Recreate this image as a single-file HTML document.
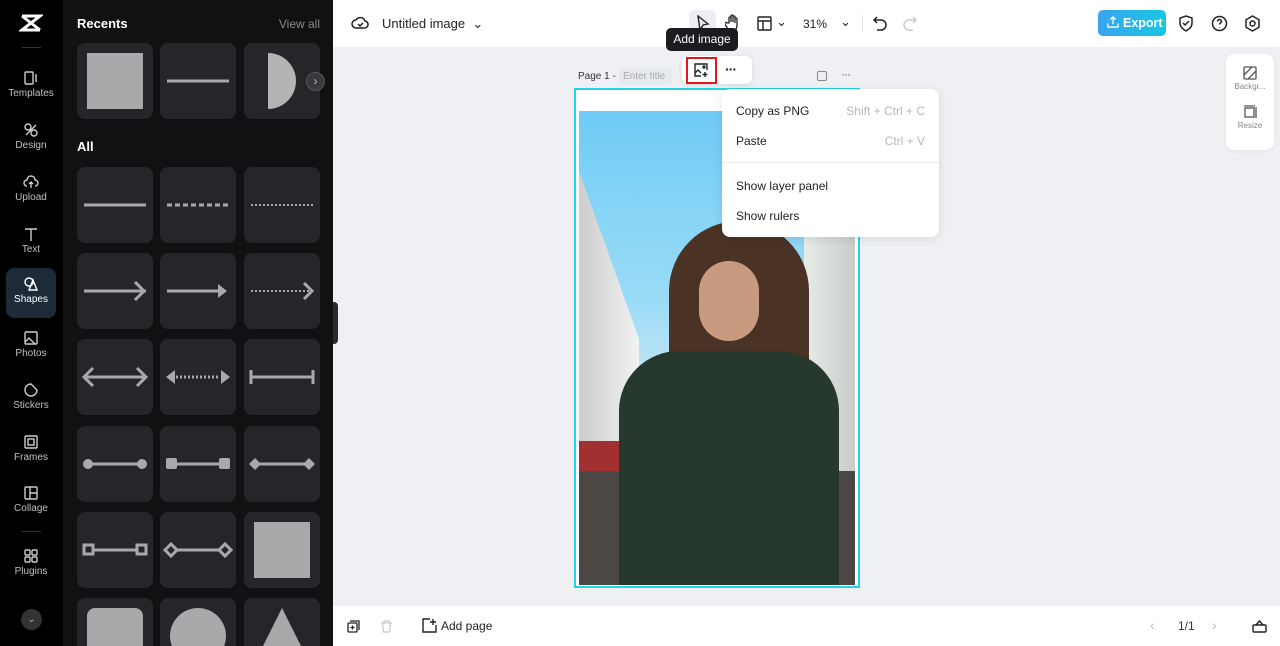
<!DOCTYPE html>
<html><head><meta charset="utf-8"><style>
*{box-sizing:border-box;margin:0;padding:0}
html{width:1280px;height:646px;overflow:hidden}
body{width:1280px;height:646px;overflow:hidden;font-family:"Liberation Sans",sans-serif;background:#eef0f4;position:relative}
.nav{position:absolute;left:0;top:0;width:63px;height:646px;background:#000}
.nav .it{position:absolute;left:6px;width:50px;height:50px;color:#bfc0c4;font-size:10px;text-align:center}
.nav .it svg{display:block;margin:8px auto 2px}
.panel{position:absolute;left:63px;top:0;width:270px;height:646px;background:#111114;overflow:hidden}
.card{position:absolute;width:76px;height:76px;background:#252629;border-radius:8px}
.card svg{position:absolute;left:0;top:0}
.top{position:absolute;left:333px;top:0;width:947px;height:47px;background:#fff}
.bot{position:absolute;left:333px;top:606px;width:947px;height:40px;background:#fff}
.menu{position:absolute;left:722px;top:89px;width:217px;height:148px;background:#fff;border-radius:8px;box-shadow:0 2px 10px rgba(0,0,0,.1);font-size:12px;color:#222}
.menu div{position:absolute;left:14px}
.menu span{position:absolute;right:14px;color:#b5b8bf}
</style></head><body>
<div class="nav">
 <svg style="position:absolute;left:19px;top:13px" width="24" height="20" viewBox="0 0 24 20"><path d="M3 3h18L3 17h18M3 3l18 14" stroke="#fff" stroke-width="3" fill="none"/></svg>
 <div style="position:absolute;left:22px;top:47px;width:19px;height:1px;background:#333"></div>
 <div class="it" style="top:62px"><svg width="16" height="16" viewBox="0 0 16 16" fill="none" stroke="#ccc" stroke-width="1.4"><rect x="2" y="2" width="8" height="12" rx="1"/><path d="M13 4v8"/></svg>Templates</div>
 <div class="it" style="top:114px"><svg width="16" height="16" viewBox="0 0 16 16" fill="none" stroke="#ccc" stroke-width="1.4"><circle cx="5" cy="5" r="3"/><circle cx="11" cy="11" r="3"/><path d="M3 13l10-10"/></svg>Design</div>
 <div class="it" style="top:166px"><svg width="16" height="16" viewBox="0 0 16 16" fill="none" stroke="#ccc" stroke-width="1.4"><path d="M4 12a3 3 0 010-6 4 4 0 018 0 3 3 0 010 6M8 8v6M6 10l2-2 2 2"/></svg>Upload</div>
 <div class="it" style="top:218px"><svg width="16" height="16" viewBox="0 0 16 16" fill="none" stroke="#ccc" stroke-width="1.4"><path d="M2 3h12M8 3v12"/></svg>Text</div>
 <div class="it" style="top:268px;height:50px;background:#1d2a38;border-radius:8px;color:#fff"><svg width="16" height="16" viewBox="0 0 16 16" fill="none" stroke="#fff" stroke-width="1.4"><circle cx="6" cy="6" r="4"/><path d="M10 4l4 10H6z"/></svg>Shapes</div>
 <div class="it" style="top:322px"><svg width="16" height="16" viewBox="0 0 16 16" fill="none" stroke="#ccc" stroke-width="1.4"><rect x="2" y="2" width="12" height="12" rx="1"/><path d="M2 12l4-4 6 6"/></svg>Photos</div>
 <div class="it" style="top:374px"><svg width="16" height="16" viewBox="0 0 16 16" fill="none" stroke="#ccc" stroke-width="1.4"><path d="M14 8a6 6 0 11-6-6l6 6z"/></svg>Stickers</div>
 <div class="it" style="top:426px"><svg width="16" height="16" viewBox="0 0 16 16" fill="none" stroke="#ccc" stroke-width="1.4"><rect x="2" y="2" width="12" height="12" rx="1"/><rect x="5" y="5" width="6" height="6"/></svg>Frames</div>
 <div class="it" style="top:477px"><svg width="16" height="16" viewBox="0 0 16 16" fill="none" stroke="#ccc" stroke-width="1.4"><rect x="2" y="2" width="12" height="12" rx="1"/><path d="M7 2v12M7 8h7"/></svg>Collage</div>
 <div style="position:absolute;left:22px;top:531px;width:19px;height:1px;background:#333"></div>
 <div class="it" style="top:540px"><svg width="16" height="16" viewBox="0 0 16 16" fill="none" stroke="#ccc" stroke-width="1.4"><rect x="2" y="2" width="5" height="5" rx="1"/><rect x="9" y="2" width="5" height="5" rx="1"/><rect x="2" y="9" width="5" height="5" rx="1"/><rect x="9" y="9" width="5" height="5" rx="1"/></svg>Plugins</div>
 <div style="position:absolute;left:21px;top:609px;width:21px;height:21px;border-radius:50%;background:#333;color:#aaa;font-size:10px;text-align:center;line-height:21px">⌄</div>
</div>
<div class="panel">
 <div style="position:absolute;left:14px;top:16px;color:#fff;font-weight:bold;font-size:13px">Recents</div>
 <div style="position:absolute;right:13px;top:17px;color:#888;font-size:12px">View all</div>
 <div style="position:absolute;left:14px;top:139px;color:#fff;font-weight:bold;font-size:13px">All</div>
 <div id="cards" style="position:absolute;left:-63px;top:0;width:333px;height:646px"></div>
 <div style="position:absolute;left:243px;top:72px;width:19px;height:19px;border-radius:50%;background:#38393d;border:1px solid #555;color:#bbb;font-size:12px;text-align:center;line-height:16px">›</div>
</div>
<div style="position:absolute;left:333px;top:302px;width:5px;height:42px;background:#2a2a2d;border-radius:0 4px 4px 0"></div>

<div class="top">
 <svg style="position:absolute;left:18px;top:15px" width="18" height="16" viewBox="0 0 18 16" fill="none" stroke="#222" stroke-width="1.5"><path d="M5 13a4 4 0 010-8 5 5 0 019 1 3.5 3.5 0 01-1 7z"/><path d="M7 9l2 2 3-3"/></svg>
 <div style="position:absolute;left:49px;top:16px;font-size:13px;color:#222">Untitled image &nbsp;⌄</div>
 <div style="position:absolute;left:356px;top:10px;width:27px;height:27px;background:#eceef1;border-radius:6px"></div>
 <svg style="position:absolute;left:363px;top:15px" width="14" height="16" viewBox="0 0 14 16" fill="none" stroke="#222" stroke-width="1.4"><path d="M2 1l10 8-5 1-3 5z"/></svg>
 <svg style="position:absolute;left:392px;top:14px" width="16" height="18" viewBox="0 0 16 18" fill="none" stroke="#222" stroke-width="1.3"><path d="M4 9V4a1 1 0 012 0v4V2a1 1 0 012 0v6V3a1 1 0 012 0v6V5a1 1 0 012 0v6c0 4-2 6-5 6s-4-2-6-5l-1-2a1 1 0 012-1z"/></svg>
 <svg style="position:absolute;left:424px;top:16px" width="15" height="15" viewBox="0 0 15 15" fill="none" stroke="#222" stroke-width="1.4"><rect x="1" y="1" width="13" height="13" rx="1"/><path d="M1 5h13M6 5v9"/></svg>
 <div style="position:absolute;left:443px;top:14px;font-size:13px;color:#222">⌄</div>
 <div style="position:absolute;left:470px;top:17px;font-size:12px;color:#222">31%</div>
 <div style="position:absolute;left:507px;top:14px;font-size:13px;color:#222">⌄</div>
 <div style="position:absolute;left:529px;top:15px;width:1px;height:17px;background:#ddd"></div>
 <svg style="position:absolute;left:539px;top:15px" width="16" height="16" viewBox="0 0 16 16" fill="none" stroke="#222" stroke-width="1.5"><path d="M5 2L2 5l3 3M2 5h7a5 5 0 010 10H5"/></svg>
 <svg style="position:absolute;left:569px;top:15px" width="16" height="16" viewBox="0 0 16 16" fill="none" stroke="#ccc" stroke-width="1.5"><path d="M11 2l3 3-3 3M14 5H7a5 5 0 000 10h4"/></svg>
 <div style="position:absolute;left:765px;top:10px;width:68px;height:26px;border-radius:5px;background:linear-gradient(90deg,#3aa4f0,#16c7e3);color:#fff;font-weight:bold;font-size:12.5px;line-height:26px;padding-left:25px">Export</div>
 <svg style="position:absolute;left:774px;top:16px" width="12" height="12" viewBox="0 0 13 13" fill="none" stroke="#fff" stroke-width="1.4"><path d="M6.5 9V1M3.5 4l3-3 3 3M1 8v4h11V8"/></svg>
 <svg style="position:absolute;left:845px;top:15px" width="16" height="17" viewBox="0 0 16 17" fill="none" stroke="#222" stroke-width="1.5"><path d="M8 1l6 2v5c0 4-3 6-6 8-3-2-6-4-6-8V3z"/><path d="M5 8l2 2 4-4"/></svg>
 <svg style="position:absolute;left:878px;top:15px" width="17" height="17" viewBox="0 0 17 17" fill="none" stroke="#222" stroke-width="1.5"><circle cx="8.5" cy="8.5" r="7"/><path d="M6.5 6.5a2 2 0 114 0c0 1.5-2 1.5-2 3M8.5 12v.5"/></svg>
 <svg style="position:absolute;left:911px;top:15px" width="17" height="17" viewBox="0 0 17 17" fill="none" stroke="#222" stroke-width="1.5"><path d="M8.5 1l6.5 3.75v7.5L8.5 16 2 12.25v-7.5z"/><circle cx="8.5" cy="8.5" r="2.5"/></svg>
</div>
<div style="position:absolute;left:666px;top:28px;width:72px;height:23px;background:#1b1c1f;border-radius:5px;color:#fff;font-size:12px;text-align:center;line-height:23px">Add image</div>
<div style="position:absolute;left:682px;top:56px;width:70px;height:28px;background:#fff;border-radius:6px;box-shadow:0 1px 5px rgba(0,0,0,.1)"></div>
<div style="position:absolute;left:686px;top:57px;width:31px;height:27px;border:2px solid #e0191f"></div>
<svg style="position:absolute;left:694px;top:63px" width="15" height="15" viewBox="0 0 15 15" fill="none" stroke="#222" stroke-width="1.4"><path d="M9 1H1v12h6M13 7V1H9"/><path d="M1 10l3-3 3 3M11 9v5M8.5 11.5h5"/><circle cx="10" cy="4" r="1"/></svg>
<div style="position:absolute;left:725px;top:61px;font-size:14px;font-weight:bold;color:#222;letter-spacing:-1px">···</div>
<div style="position:absolute;left:578px;top:71px;font-size:10px;color:#333">Page 1 -</div>
<div style="position:absolute;left:619px;top:68px;width:53px;height:17px;background:#e6e9ee;border-radius:3px;font-size:10px;color:#aaa;padding:3px 4px">Enter title</div>
<div style="position:absolute;left:817px;top:71px;width:10px;height:10px;border:1.3px solid #888;border-radius:2px"></div>
<div style="position:absolute;left:841px;top:67px;font-size:12px;color:#666;letter-spacing:-1px">···</div>
<div style="position:absolute;left:574px;top:88px;width:286px;height:500px;border:2px solid #22d3e6;background:#fff"></div>
<div style="position:absolute;left:579px;top:111px;width:276px;height:474px;overflow:hidden;background:linear-gradient(180deg,#6fcbf5 0%,#9bdcf7 40%,#c9e7f2 60%)">
 <div style="position:absolute;left:0;top:60px;width:60px;height:420px;background:linear-gradient(90deg,#ccc,#f2f2f2);clip-path:polygon(0 0,100% 40%,100% 100%,0 100%)"></div>
 <div style="position:absolute;left:225px;top:0;width:51px;height:474px;background:linear-gradient(90deg,#e8ece8,#c8cdc9)"></div>
 <div style="position:absolute;left:0;top:330px;width:80px;height:40px;background:#a23030"></div>
 <div style="position:absolute;left:0;top:360px;width:276px;height:120px;background:#4a4744"></div>
 <div style="position:absolute;left:90px;top:110px;width:140px;height:220px;border-radius:70px 70px 20px 20px;background:#4a3324"></div>
 <div style="position:absolute;left:120px;top:150px;width:60px;height:80px;border-radius:30px;background:#c89a80"></div>
 <div style="position:absolute;left:40px;top:240px;width:220px;height:240px;border-radius:60px 60px 0 0;background:#27382d"></div>
</div>
<div class="menu">
 <div style="top:15px">Copy as PNG</div><span style="top:15px">Shift + Ctrl + C</span>
 <div style="top:45px">Paste</div><span style="top:45px">Ctrl + V</span>
 <p style="position:absolute;left:0;right:0;top:73px;height:1px;background:#e8e8e8"></p>
 <div style="top:90px">Show layer panel</div>
 <div style="top:120px">Show rulers</div>
</div>
<div style="position:absolute;left:1226px;top:54px;width:48px;height:96px;background:#fff;border-radius:8px;box-shadow:0 1px 4px rgba(0,0,0,.06);font-size:8px;color:#888;text-align:center">
 <svg style="margin-top:12px" width="14" height="14" viewBox="0 0 14 14" fill="none" stroke="#555" stroke-width="1.3"><rect x="1" y="1" width="12" height="12" rx="1"/><path d="M1 9l8-8M5 13l8-8"/></svg><div>Backgr...</div>
 <svg style="margin-top:14px" width="14" height="14" viewBox="0 0 14 14" fill="none" stroke="#555" stroke-width="1.3"><rect x="2" y="3" width="9" height="9"/><path d="M13 2v11M1 1h11"/></svg><div>Resize</div>
</div>
<div class="bot">
 <svg style="position:absolute;left:14px;top:14px" width="13" height="13" viewBox="0 0 13 13" fill="none" stroke="#222" stroke-width="1.3"><rect x="1" y="3" width="9" height="9" rx="1"/><path d="M3 1h9v9M5.5 5.5v4M3.5 7.5h4"/></svg>
 <svg style="position:absolute;left:47px;top:14px" width="13" height="13" viewBox="0 0 13 13" fill="none" stroke="#ccc" stroke-width="1.3"><path d="M1 3h11M4 3V1h5v2M2.5 3l1 9h6l1-9"/></svg>
 <svg style="position:absolute;left:89px;top:12px" width="15" height="15" viewBox="0 0 15 15" fill="none" stroke="#222" stroke-width="1.4"><path d="M8 1H1v13h13V7M11 1v6M8 4h6"/></svg>
 <div style="position:absolute;left:108px;top:13px;font-size:12px;color:#222">Add page</div>
 <div style="position:absolute;left:817px;top:11px;font-size:14px;color:#bbb">‹</div>
 <div style="position:absolute;left:845px;top:13px;font-size:12px;color:#333">1/1</div>
 <div style="position:absolute;left:879px;top:11px;font-size:14px;color:#bbb">›</div>
 <svg style="position:absolute;left:919px;top:13px" width="15" height="14" viewBox="0 0 15 14" fill="none" stroke="#222" stroke-width="1.4"><rect x="1" y="6" width="13" height="7" rx="1"/><path d="M4 6l3.5-4L11 6"/></svg>
</div>
<script>
var G='#a8a9ab',S='stroke="'+G+'" stroke-width="3" fill="none"';
var shapes=[
['<rect x="10" y="10" width="56" height="56" fill="'+G+'"/>','<path d="M7 38h62" '+S+'/>','<path d="M24 10a28 28 0 010 56z" fill="#b4b4b4"/>'],
['<path d="M7 38h62" '+S+'/>','<path d="M7 38h62" '+S+' stroke-dasharray="5 3"/>','<path d="M7 38h62" stroke="'+G+'" stroke-width="2" stroke-dasharray="2 2"/>'],
['<path d="M7 38h62M58 29l9 9-9 9" '+S+'/>','<path d="M7 38h52" '+S+'/><path d="M58 31l9 7-9 7z" fill="'+G+'"/>','<path d="M7 38h60" stroke="'+G+'" stroke-width="2" stroke-dasharray="2 2"/><path d="M60 30l8 8-8 8" '+S+'/>'],
['<path d="M7 38h62M16 29l-9 9 9 9M60 29l9 9-9 9" '+S+'/>','<path d="M6 38l9-7v14zM70 38l-9-7v14z" fill="'+G+'"/><path d="M16 38h44" stroke="'+G+'" stroke-width="3" stroke-dasharray="2 2"/>','<path d="M7 38h62M7 31v14M69 31v14" '+S+'/>'],
['<path d="M12 38h52" '+S+'/><circle cx="11" cy="38" r="5" fill="'+G+'"/><circle cx="65" cy="38" r="5" fill="'+G+'"/>','<path d="M12 38h52" '+S+'/><rect x="6" y="32" width="11" height="11" rx="2" fill="'+G+'"/><rect x="59" y="32" width="11" height="11" rx="2" fill="'+G+'"/>','<path d="M10 38h56" '+S+'/><path d="M5 38l6-6 6 6-6 6zM59 38l6-6 6 6-6 6z" fill="'+G+'"/>'],
['<path d="M16 38h44" '+S+'/><rect x="7" y="33" width="9" height="9" '+S+'/><rect x="60" y="33" width="9" height="9" '+S+'/>','<path d="M17 38h42" '+S+'/><path d="M5 38l6-6 6 6-6 6zM59 38l6-6 6 6-6 6z" '+S+'/>','<rect x="10" y="10" width="56" height="56" fill="'+G+'"/>'],
['<rect x="10" y="10" width="56" height="56" rx="8" fill="'+G+'"/>','<circle cx="38" cy="38" r="28" fill="'+G+'"/>','<path d="M38 10l28 56H10z" fill="'+G+'"/>']];
var xs=[77,160,244],ys=[43,167,253,339,426,512,598],h='';
shapes.forEach(function(r,i){r.forEach(function(s,j){h+='<div class="card" style="left:'+xs[j]+'px;top:'+ys[i]+'px"><svg width="76" height="76">'+s+'</svg></div>';});});
document.getElementById('cards').innerHTML=h;
</script>
</body></html>
